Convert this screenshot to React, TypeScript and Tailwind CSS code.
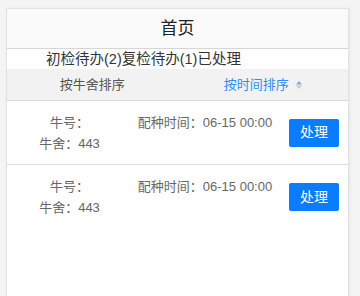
import React from "react";

const font = { fontFamily: '"Liberation Sans", "Noto Sans CJK SC", sans-serif' };

type Task = { id: number; cowNo: string; shed: string; time: string };

const tasks: Task[] = [
  { id: 1, cowNo: "", shed: "443", time: "06-15 00:00" },
  { id: 2, cowNo: "", shed: "443", time: "06-15 00:00" },
];

function SortIcon() {
  return (
    <svg width="6" height="8" viewBox="0 0 6 8" className="ml-[7px]">
      <path d="M3 0 L6 3.4 L0 3.4 Z" fill="#7fa7d6" />
      <path d="M3 8 L6 4.6 L0 4.6 Z" fill="#c8c8c8" />
    </svg>
  );
}

function TaskRow({ task, last }: { task: Task; last: boolean }) {
  return (
    <div className={`flex items-center h-[64px] text-[13px] text-[#666] ${last ? "" : "border-b border-[#dcdcdc]"}`}>
      <div className="w-[125px] flex flex-col items-center leading-[21px]">
        <span>牛号：{task.cowNo}</span>
        <span>牛舍：{task.shed}</span>
      </div>
      <div className="w-[146px] self-start pt-[11px] leading-[21px] text-center">
        配种时间：{task.time}
      </div>
      <div className="flex-1 flex justify-center pl-[2px]">
        <button className="w-[50px] h-[28px] rounded-[2px] bg-[#0a7cff] text-white text-[14px]">处理</button>
      </div>
    </div>
  );
}

export default function App() {
  return (
    <div className="h-[296px] overflow-hidden bg-[#f4f4f4] pt-[8px]" style={font}>
      <div className="ml-[6px] w-[343px] h-[300px] bg-white border border-[#e2e2e2] shadow-[1px_0_3px_rgba(0,0,0,0.06)]">
        {/* header */}
        <div className="h-[40px] bg-[#fafafa] border-b border-[#d6d6d6] flex items-center justify-center text-[17px] text-[#222]">
          首页
        </div>

        {/* tabs */}
        <div className="h-[20px] pl-[39px] text-[14.5px] leading-[20px] text-[#333]">
          初检待办(2)复检待办(1)已处理
        </div>

        {/* sort bar */}
        <div className="h-[32px] bg-[#f2f2f2] border-b border-[#dadada] flex text-[13px]">
          <div className="flex-1 flex items-center justify-center text-[#555]">按牛舍排序</div>
          <div className="flex-1 flex items-center justify-center text-[#2f8cf0]">
            按时间排序
            <SortIcon />
          </div>
        </div>

        {tasks.map((t, i) => (
          <TaskRow key={t.id} task={t} last={i === tasks.length - 1} />
        ))}
      </div>
    </div>
  );
}
